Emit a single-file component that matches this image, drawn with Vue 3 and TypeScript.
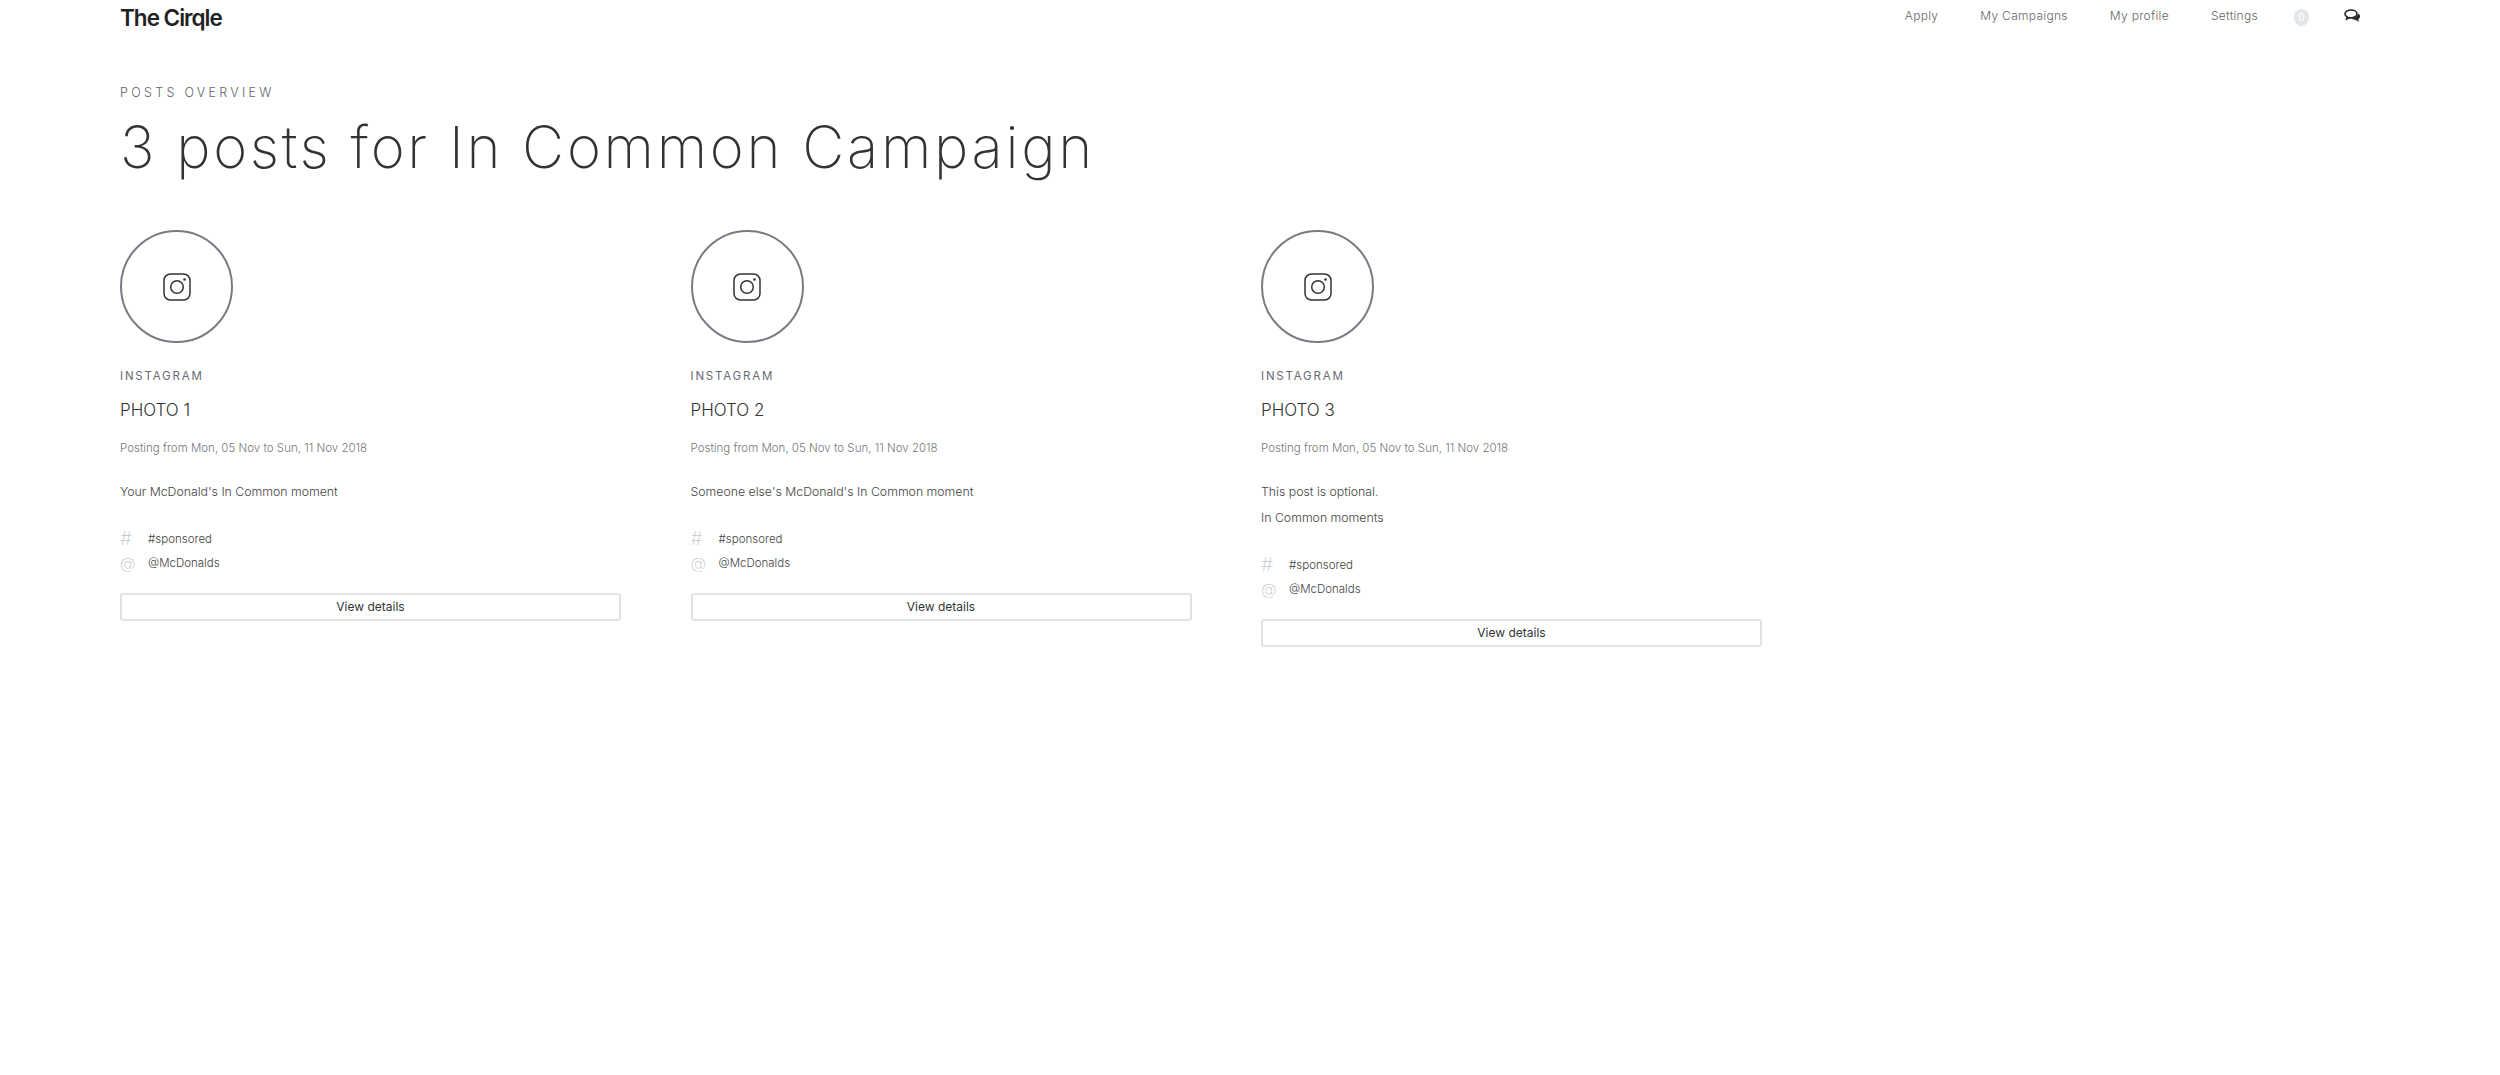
<script setup lang="ts">
interface Post {
  title: string
  lines: string[]
}

const navLinks = ['Apply', 'My Campaigns', 'My profile', 'Settings']

const posts: Post[] = [
  { title: 'PHOTO 1', lines: ["Your McDonald's In Common moment"] },
  { title: 'PHOTO 2', lines: ["Someone else's McDonald's In Common moment"] },
  { title: 'PHOTO 3', lines: ['This post is optional.', 'In Common moments'] },
]
</script>

<template>
  <div class="page">
    <header class="topbar">
      <div class="logo">The Cirqle</div>
      <nav class="nav">
        <a v-for="link in navLinks" :key="link" class="nav-link">{{ link }}</a>
        <span class="badge">0</span>
        <svg class="chat" width="17" height="14" viewBox="0 0 17 14" fill="none">
          <path d="M14.200 4.600c1.100.7 1.800 1.700 1.800 2.800 0 1.100-.7 2.100-1.800 2.700l.6 3-3.200-2.300c-1.500 0-2.900-.4-3.900-1.100 3.200-.1 6.200-2 6.500-5.100z" fill="#222" />
          <path d="M7 1C3.700 1 1 2.700 1 4.900c0 1.300.9 2.400 2.300 3.100L2.600 10l2.700-1.300c.5.1 1.100.2 1.700.2 3.300 0 6-1.800 6-4S10.300 1 7 1z" stroke="#222" stroke-width="1.600" fill="#fff" />
        </svg>
      </nav>
    </header>

    <main class="content">
      <div class="eyebrow">POSTS OVERVIEW</div>
      <h1 class="title">3 posts for In Common Campaign</h1>

      <div class="posts">
        <section v-for="post in posts" :key="post.title" class="post">
          <div class="circle">
            <svg width="28" height="28" viewBox="0 0 28 28" fill="none" stroke="#333" stroke-width="1.500">
              <rect x="1" y="1" width="26" height="26" rx="6.500" />
              <circle cx="14" cy="14" r="6.300" />
              <circle cx="21.500" cy="6.500" r="1.300" fill="#333" stroke="none" />
            </svg>
          </div>
          <div class="platform">INSTAGRAM</div>
          <h2 class="post-title">{{ post.title }}</h2>
          <div class="dates">Posting from Mon, 05 Nov to Sun, 11 Nov 2018</div>
          <div class="desc">
            <p v-for="line in post.lines" :key="line">{{ line }}</p>
          </div>
          <div class="tag-row tags-first">
            <span class="tag-icon">#</span>
            <span class="tag-text">#sponsored</span>
          </div>
          <div class="tag-row">
            <span class="tag-icon at">@</span>
            <span class="tag-text">@McDonalds</span>
          </div>
          <button class="details" type="button">View details</button>
        </section>
      </div>
    </main>
  </div>
</template>

<style>
body {
  background: #fff;
}
</style>

<style scoped>
.page {
  height: 1075px;
  background: #fff;
  font-family: Inter, "Liberation Sans", sans-serif;
  color: #333;
  overflow: hidden;
}

.topbar {
  display: flex;
  justify-content: space-between;
  padding: 0 139px 0 120px;
  height: 30px;
}

.logo {
  font-size: 22.500px;
  font-weight: 600;
  line-height: 36px;
  letter-spacing: -1px;
  color: #222;
}

.nav {
  display: flex;
  align-items: center;
  height: 30px;
}

.nav-link {
  font-size: 12px;
  font-weight: 300;
  letter-spacing: 0.300px;
  color: #666;
  margin-right: 42px;
}

.nav-link:nth-child(4) {
  margin-right: 36px;
}

.badge {
  width: 15px;
  height: 17px;
  margin-top: 4px;
  margin-right: 35px;
  border-radius: 8px;
  background: #e3e6eb;
  color: #fff;
  font-size: 10px;
  line-height: 17px;
  text-align: center;
}

.chat {
  display: block;
  margin-top: 2px;
}

.content {
  padding: 0 120px;
}

.eyebrow {
  margin-top: 56px;
  font-size: 12.500px;
  line-height: 14px;
  font-weight: 300;
  letter-spacing: 3.300px;
  color: #5d6570;
}

.title {
  margin: 12px 0 0;
  font-size: 58px;
  line-height: 70px;
  font-weight: 200;
  letter-spacing: 2.700px;
  color: #333;
}

.posts {
  display: grid;
  grid-template-columns: repeat(3, 501px);
  column-gap: 69.500px;
  align-items: start;
  margin-top: 48px;
}

.circle {
  display: flex;
  align-items: center;
  justify-content: center;
  box-sizing: border-box;
  width: 113px;
  height: 113px;
  border: 2px solid #777c83;
  border-radius: 50%;
}

.platform {
  margin-top: 25.500px;
  font-size: 11.500px;
  line-height: 14px;
  letter-spacing: 1.800px;
  font-weight: 400;
  color: #666b72;
}

.post-title {
  margin: 17.500px 0 0;
  font-size: 17px;
  line-height: 20px;
  font-weight: 300;
  color: #333;
}

.dates {
  margin-top: 19px;
  font-size: 11.500px;
  line-height: 18px;
  font-weight: 300;
  color: #777;
}

.desc {
  margin-top: 21.500px;
}

.desc p {
  margin: 0;
  font-size: 12.300px;
  line-height: 26px;
  font-weight: 300;
  color: #444;
}

.tag-row {
  display: flex;
  align-items: center;
  height: 24px;
}

.tags-first {
  margin-top: 22px;
}

.tag-icon {
  width: 28px;
  font-size: 19px;
  font-weight: 200;
  color: #c3c8cf;
}

.tag-icon.at {
  font-size: 16px;
}

.tag-text {
  font-size: 11.500px;
  font-weight: 300;
  color: #444;
}

.details {
  display: block;
  box-sizing: border-box;
  width: 501px;
  height: 28px;
  margin-top: 18px;
  padding: 0;
  background: #fff;
  border: 2px solid #dfe3e8;
  border-radius: 3px;
  font-family: inherit;
  font-size: 12px;
  font-weight: 400;
  color: #333;
}
</style>
